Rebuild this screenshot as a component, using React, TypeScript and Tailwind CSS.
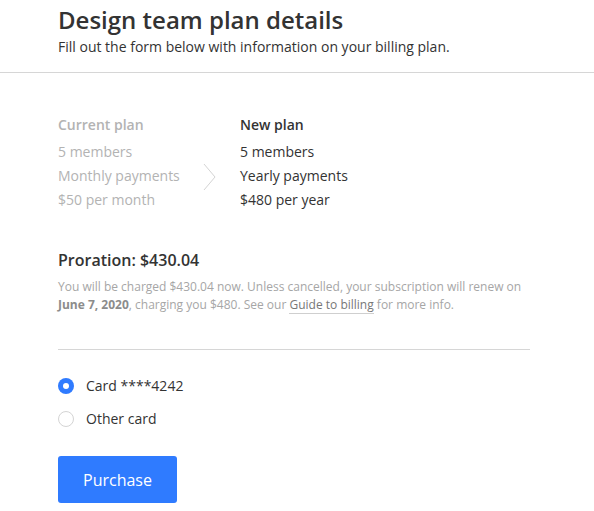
import React, { useState } from "react";

const font = { fontFamily: '"Open Sans", "Noto Sans", sans-serif' };

function Radio({ checked, label, onClick }: { checked: boolean; label: string; onClick: () => void }) {
  return (
    <button type="button" onClick={onClick} className="flex h-[33px] items-center gap-[12px] text-left">
      {checked ? (
        <span className="flex h-[16px] w-[16px] items-center justify-center rounded-full bg-[#2f7bff]">
          <span className="h-[6px] w-[6px] rounded-full bg-white" />
        </span>
      ) : (
        <span className="h-[16px] w-[16px] rounded-full border border-[#d4d4d4] bg-white" />
      )}
      <span className="text-[14px] text-[#333]">{label}</span>
    </button>
  );
}

export default function App() {
  const [card, setCard] = useState("saved");

  return (
    <div className="min-h-[511px] w-full bg-white text-[#333]" style={font}>
      <header className="border-b border-[#d6d6d6] px-[58px] pb-[14px] pt-[4px]">
        <h1 className="text-[24px] font-semibold leading-[32px] text-[#333]">Design team plan details</h1>
        <p className="text-[14px] leading-[22px] text-[#333]">
          Fill out the form below with information on your billing plan.
        </p>
      </header>

      <div className="w-[530px] px-[58px] pt-[40px]">
        {/* plan comparison */}
        <div className="flex text-[14px] leading-[24px]">
          <div className="w-[146px] text-[#b3b3b3]">
            <div className="font-semibold">Current plan</div>
            <div className="mt-[3px]">5 members</div>
            <div>Monthly payments</div>
            <div>$50 per month</div>
          </div>
          <div className="flex w-[36px] items-center pt-[28px]">
            <svg width="14" height="28" viewBox="0 0 14 28" fill="none" className="ml-[-1px]">
              <path d="M1 1 L12 14 L1 27" stroke="#d4d4d4" strokeWidth="1" />
            </svg>
          </div>
          <div className="text-[#333]">
            <div className="font-semibold">New plan</div>
            <div className="mt-[3px]">5 members</div>
            <div>Yearly payments</div>
            <div>$480 per year</div>
          </div>
        </div>

        {/* proration */}
        <h2 className="mt-[36px] text-[16px] font-semibold leading-[24px] text-[#333]">Proration: $430.04</h2>
        <p className="mt-[6px] w-[472px] text-[12px] leading-[18px] text-[#a6a6a6]">
          You will be charged $430.04 now. Unless cancelled, your subscription will renew on{" "}
          <span className="font-bold text-[#8c8c8c]">June 7, 2020</span>, charging you $480. See our{" "}
          <a href="#" className="border-b border-[#cfcfcf] text-[#777]">
            Guide to billing
          </a>{" "}
          for more info.
        </p>

        <div className="mt-[35px] w-[472px] border-t border-[#d6d6d6]" />

        {/* payment method */}
        <div className="mt-[19px] flex flex-col">
          <Radio checked={card === "saved"} label="Card ****4242" onClick={() => setCard("saved")} />
          <Radio checked={card === "other"} label="Other card" onClick={() => setCard("other")} />
        </div>

        <button
          type="button"
          className="mt-[21px] h-[47px] w-[119px] rounded-[3px] bg-[#2f7bff] text-[16px] text-white"
        >
          Purchase
        </button>
      </div>
    </div>
  );
}
